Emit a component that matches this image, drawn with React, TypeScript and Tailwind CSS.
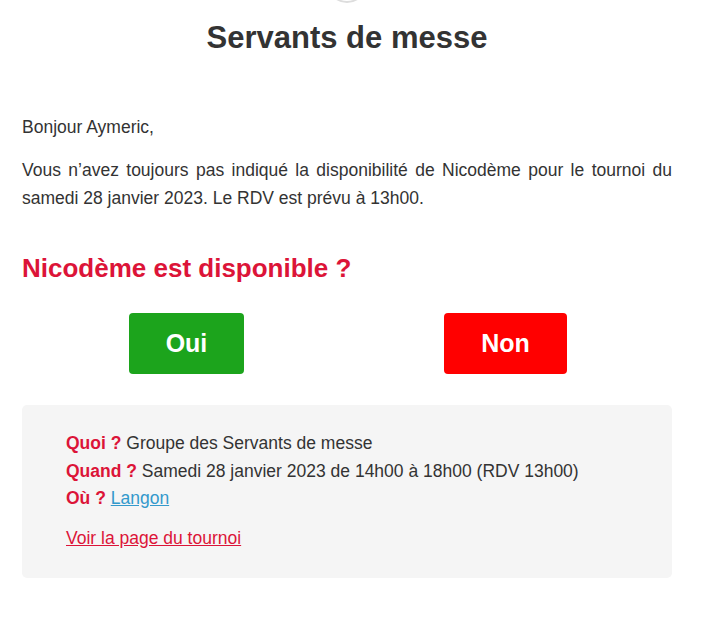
const App = () => {
  const details = [
    { label: "Quoi ?", text: "Groupe des Servants de messe" },
    { label: "Quand ?", text: "Samedi 28 janvier 2023 de 14h00 à 18h00 (RDV 13h00)" },
  ];

  return (
    <div className="min-h-screen bg-white font-['Liberation_Sans',Arial,sans-serif] text-[#333333]">
      <div className="w-[650px] ml-[22px]">
        {/* Logo, cropped at the top */}
        <div className="flex justify-center h-[4px] overflow-hidden">
          <div className="w-[40px] h-[40px] -mt-[37px] rounded-full border-2 border-[#dddddd] bg-white shrink-0" />
        </div>

        <h1 className="text-center text-[31px] font-bold leading-[34px] mt-[17px]">
          Servants de messe
        </h1>

        <p className="text-[17.5px] leading-[28px] mt-[58px]">Bonjour Aymeric,</p>
        <p className="text-[17.5px] leading-[28px] mt-[15px] text-justify">
          Vous n’avez toujours pas indiqué la disponibilité de Nicodème pour le tournoi du
          samedi 28 janvier 2023. Le RDV est prévu à 13h00.
        </p>

        <h2 className="text-[26px] font-bold leading-[30px] text-[#dc1438] mt-[41px]">
          Nicodème est disponible ?
        </h2>

        <div className="grid grid-cols-2 mt-[30px]">
          <div className="flex justify-center">
            <a className="ml-[4px] w-[115px] h-[61px] flex items-center justify-center rounded-[4px] bg-[#1ca41c] text-white text-[25px] font-bold">
              Oui
            </a>
          </div>
          <div className="flex justify-center">
            <a className="-ml-[8px] w-[123px] h-[61px] flex items-center justify-center rounded-[4px] bg-[#ff0000] text-white text-[25px] font-bold">
              Non
            </a>
          </div>
        </div>

        <div className="mt-[31px] bg-[#f5f5f5] rounded-[5px] pl-[44px] pt-[25px] pb-[26px] text-[17.5px]">
          {details.map((d) => (
            <p key={d.label} className="leading-[27.5px]">
              <span className="font-bold text-[#dc1438]">{d.label}</span> {d.text}
            </p>
          ))}
          <p className="leading-[27.5px]">
            <span className="font-bold text-[#dc1438]">Où ?</span>{" "}
            <a className="text-[#3399cc] underline">Langon</a>
          </p>
          <p className="leading-[27.5px] mt-[12px]">
            <a className="text-[#dc1438] underline">Voir la page du tournoi</a>
          </p>
        </div>
      </div>
    </div>
  );
};

export default App;
